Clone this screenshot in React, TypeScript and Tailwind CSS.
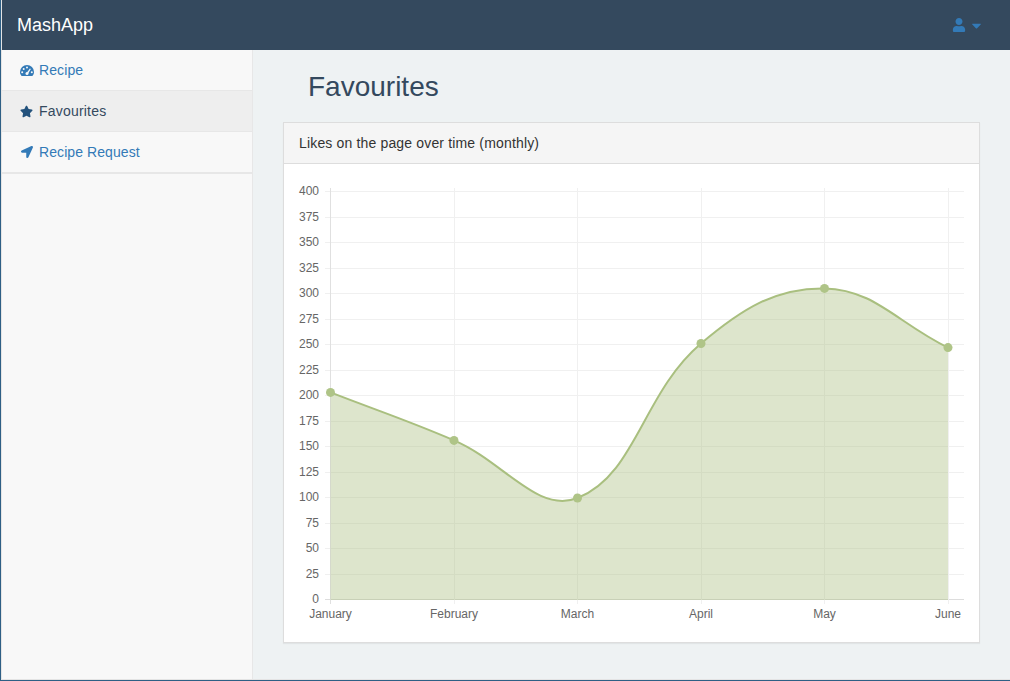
import { FaCaretDown, FaLocationArrow, FaStar, FaUser } from 'react-icons/fa'

const months = ['January', 'February', 'March', 'April', 'May', 'June']
const likes = [203, 156, 99.5, 251, 305, 247]
const ticks = Array.from({ length: 17 }, (_, i) => i * 25)
const xs = [46.5, 170, 293.5, 417, 540.5, 664]

// svg origin is the top left of the card body (284, 164)
const yFor = (v: number) => 27.5 + (400 - v) * 1.02
const gridY = (v: number) => Math.round(27 + ((400 - v) / 25) * 25.5) + 0.5
const points = likes.map((v, i) => ({ x: xs[i], y: yFor(v) }))

// same spline as chart.js, tension 0.4
function buildLine() {
  const dist = (a: { x: number; y: number }, b: { x: number; y: number }) => Math.hypot(a.x - b.x, a.y - b.y)
  const controls = points.map((cur, i) => {
    const prev = points[i - 1] ?? cur
    const next = points[i + 1] ?? cur
    const d01 = dist(prev, cur)
    const d12 = dist(cur, next)
    const fa = (0.4 * d01) / (d01 + d12)
    const fb = (0.4 * d12) / (d01 + d12)
    return {
      inX: cur.x - fa * (next.x - prev.x),
      inY: cur.y - fa * (next.y - prev.y),
      outX: cur.x + fb * (next.x - prev.x),
      outY: cur.y + fb * (next.y - prev.y),
    }
  })
  let d = `M${points[0].x} ${points[0].y}`
  for (let i = 1; i < points.length; i++) {
    const a = controls[i - 1]
    const b = controls[i]
    d += ` C${a.outX} ${a.outY} ${b.inX} ${b.inY} ${points[i].x} ${points[i].y}`
  }
  return d
}

function GaugeIcon() {
  return (
    <svg width="14" height="11" viewBox="0 0 14 11" className="mx-auto block">
      <path d="M1.6 11 C0.6 9.8 0 8.6 0 7 A7 7 0 0 1 14 7 C14 8.6 13.4 9.8 12.4 11 Z" fill="currentColor" />
      <g fill="#f8f8f8">
        <circle cx="2.2" cy="7.3" r="1" />
        <circle cx="3.7" cy="3.9" r="1" />
        <circle cx="7" cy="2.4" r="1" />
        <circle cx="11.8" cy="7.3" r="1" />
        <circle cx="7" cy="8.6" r="1.5" />
      </g>
      <path d="M6.4 8.2 L9.9 3.4 L10.9 4 L7.8 9 Z" fill="#f8f8f8" />
    </svg>
  )
}

function LikesChart() {
  const line = buildLine()
  const area = `${line} L664 436 L46.5 436 Z`
  return (
    <svg width="695" height="478" className="block" fontFamily="'Liberation Sans', Arial, sans-serif" fontSize="12" fill="#666666">
      {ticks.map((t) => (
        <g key={t}>
          <line x1="41" x2="680" y1={gridY(t)} y2={gridY(t)} stroke={t === 0 ? '#dddddd' : '#f0f0f0'} />
          <text x="35" y={gridY(t) + 3} textAnchor="end">{t}</text>
        </g>
      ))}
      {xs.map((x, i) => (
        <g key={x}>
          <line x1={Math.floor(x) + 0.5} x2={Math.floor(x) + 0.5} y1="24" y2="440" stroke={i === 0 ? '#e0e0e0' : '#f0f0f0'} />
          <text x={x} y="454" textAnchor="middle">{months[i]}</text>
        </g>
      ))}
      <path d={area} fill="#a9bf7f" fillOpacity="0.4" />
      <path d={line} fill="none" stroke="#a9bf7f" strokeWidth="2" />
      {points.map((p) => (
        <circle key={p.x} cx={p.x} cy={p.y} r="4.5" fill="#afc487" />
      ))}
    </svg>
  )
}

export default function App() {
  return (
    <div className="h-screen overflow-hidden border-b border-l border-[#2e5f85] font-['Liberation_Sans',Arial,sans-serif] text-sm text-[#34495e]">
      <div className="flex h-full flex-col border-b border-l border-[#e4e4e4] bg-[#eef2f3]">
        <nav className="flex h-[50px] shrink-0 items-center justify-between bg-[#34495e] pl-[15px] pr-[26px]">
          <span className="text-lg text-white">MashApp</span>
          <div className="flex items-center gap-[3px] text-[#337ab7]">
            <FaUser className="size-[14px]" />
            <FaCaretDown className="size-[15px]" />
          </div>
        </nav>

        <div className="flex min-h-0 flex-1">
          <aside className="w-[251px] shrink-0 border-r border-[#e7e7e7] bg-[#f8f8f8]">
            <a className="flex h-[41px] items-center gap-[5px] border-b border-[#e7e7e7] pl-[17px] tracking-[0.1px] text-[#337ab7]">
              <span className="w-[15px]"><GaugeIcon /></span>
              <span>Recipe</span>
            </a>
            <a className="flex h-[41px] items-center gap-[5px] border-b border-[#e7e7e7] bg-[#eeeeee] pl-[17px] tracking-[0.2px] text-[#34495e]">
              <span className="w-[15px]"><FaStar className="mx-auto size-[13px] text-[#23527c]" /></span>
              <span>Favourites</span>
            </a>
            <a className="flex h-[42px] items-center gap-[5px] border-b-2 border-[#e7e7e7] pl-[17px] tracking-[0.08px] text-[#337ab7]">
              <span className="w-[15px]"><FaLocationArrow className="mx-auto size-[12px]" /></span>
              <span>Recipe Request</span>
            </a>
          </aside>

          <main className="flex-1 px-[30px]">
            <h1 className="pl-[25px] pt-[21px] text-[28px] leading-[32px] text-[#34495e]">Favourites</h1>
            <section className="mt-[19px] w-[697px] border border-[#dddddd] bg-white shadow-[0_1px_1px_rgba(0,0,0,0.05)]">
              <div className="flex h-[41px] items-center border-b border-[#dddddd] bg-[#f5f5f5] px-[15px] tracking-[0.16px] text-[#333333]">
                Likes on the page over time (monthly)
              </div>
              <LikesChart />
            </section>
          </main>
        </div>
      </div>
    </div>
  )
}
